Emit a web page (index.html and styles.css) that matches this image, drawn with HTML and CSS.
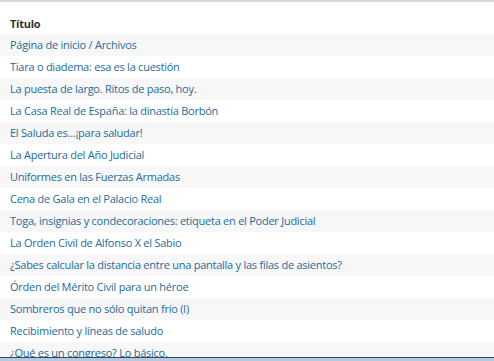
FILE: index.html
```html
<!DOCTYPE html>
<html lang="es">
<head>
<meta charset="utf-8">
<title>Títulos</title>
<link rel="stylesheet" href="styles.css">
</head>
<body>
<div class="frame">
  <div class="topbar"></div>
  <div class="list">
    <div class="head">Título</div>
    <a class="row" href="#">Página de inicio / Archivos</a>
    <a class="row" href="#">Tiara o diadema: esa es la cuestión</a>
    <a class="row" href="#">La puesta de largo. Ritos de paso, hoy.</a>
    <a class="row" href="#">La Casa Real de España: la dinastía Borbón</a>
    <a class="row" href="#">El Saluda es...¡para saludar!</a>
    <a class="row" href="#">La Apertura del Año Judicial</a>
    <a class="row" href="#">Uniformes en las Fuerzas Armadas</a>
    <a class="row" href="#">Cena de Gala en el Palacio Real</a>
    <a class="row" href="#">Toga, insignias y condecoraciones: etiqueta en el Poder Judicial</a>
    <a class="row" href="#">La Orden Civil de Alfonso X el Sabio</a>
    <a class="row" href="#">¿Sabes calcular la distancia entre una pantalla y las filas de asientos?</a>
    <a class="row" href="#">Órden del Mérito Civil para un héroe</a>
    <a class="row" href="#">Sombreros que no sólo quitan frío (I)</a>
    <a class="row" href="#">Recibimiento y líneas de saludo</a>
    <a class="row" href="#">¿Qué es un congreso? Lo básico.</a>
  </div>
  <div class="bottom"></div>
</div>
</body>
</html>
```
FILE: styles.css
```css
* { box-sizing: border-box; }
html, body { margin: 0; padding: 0; background: #fff; }
body { font-family: "Open Sans", "Noto Sans", sans-serif; font-size: 11px; letter-spacing: -0.25px; }
.frame {
  height: 361px;
  display: flex;
  flex-direction: column;
  overflow: hidden;
}
.topbar { height: 2px; background: #d9d9d9; flex: none; }
.list {
  flex: 1;
  overflow: hidden;
  display: flex;
  flex-direction: column;
}
.head {
  flex: none;
  height: 32px;
  padding: 14px 0 0 10px;
  font-weight: 700;
  color: #333;
  line-height: 16px;
}
.row {
  flex: none;
  display: block;
  height: 22px;
  line-height: 22px;
  padding-left: 10px;
  color: #1f6b99;
  text-decoration: none;
  white-space: nowrap;
}
.row:nth-of-type(odd) { background: #f7f7f7; }
.bottom {
  flex: none;
  height: 4px;
  border-top: 1px solid #34495e;
  background: #b4c8e0;
}
```
